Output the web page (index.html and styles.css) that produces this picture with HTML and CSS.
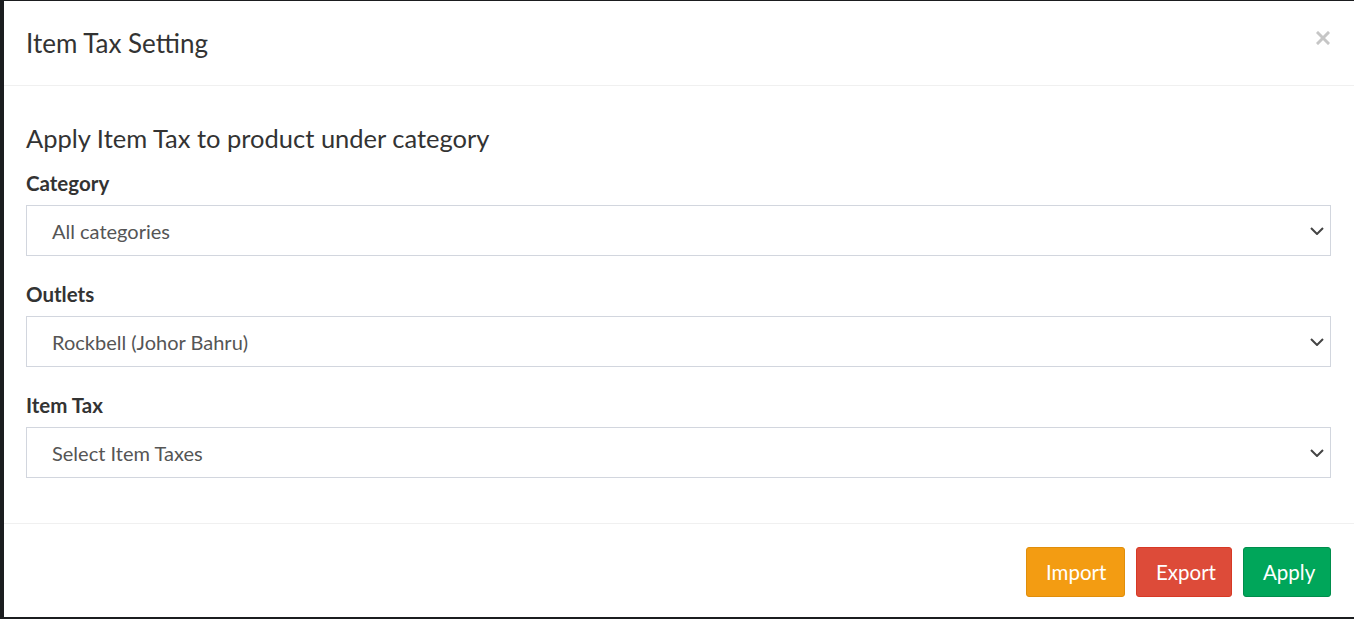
FILE: index.html
```html
<!DOCTYPE html>
<html lang="en">
<head>
<meta charset="utf-8">
<title>Item Tax Setting</title>
<link rel="stylesheet" href="styles.css">
</head>
<body>
<div class="backdrop">
  <div class="modal">
    <div class="modal-header">
      <h3 class="modal-title">Item Tax Setting</h3>
      <button class="close" type="button" aria-label="Close">
        <svg width="14" height="14" viewBox="0 0 14 14"><path d="M2 2 L12 12 M12 2 L2 12" stroke="#c6c6c6" stroke-width="3" stroke-linecap="square"/></svg>
      </button>
    </div>
    <div class="modal-body">
      <h4 class="section-title">Apply Item Tax to product under category</h4>
      <div class="field">
        <label class="field-label">Category</label>
        <div class="select"><span>All categories</span><svg class="chev" width="14" height="8" viewBox="0 0 14 8"><path d="M1 1 L7 7 L13 1" fill="none" stroke="#444" stroke-width="2"/></svg></div>
      </div>
      <div class="field">
        <label class="field-label">Outlets</label>
        <div class="select"><span>Rockbell (Johor Bahru)</span><svg class="chev" width="14" height="8" viewBox="0 0 14 8"><path d="M1 1 L7 7 L13 1" fill="none" stroke="#444" stroke-width="2"/></svg></div>
      </div>
      <div class="field">
        <label class="field-label">Item Tax</label>
        <div class="select"><span>Select Item Taxes</span><svg class="chev" width="14" height="8" viewBox="0 0 14 8"><path d="M1 1 L7 7 L13 1" fill="none" stroke="#444" stroke-width="2"/></svg></div>
      </div>
    </div>
    <div class="modal-footer">
      <button class="btn btn-import" type="button">Import</button>
      <button class="btn btn-export" type="button">Export</button>
      <button class="btn btn-apply" type="button">Apply</button>
    </div>
  </div>
</div>
</body>
</html>
```
FILE: styles.css
```css
html, body {
  margin: 0;
  padding: 0;
  height: 100%;
}
body {
  background: #1b1d1f;
  font-family: "Lato", "Liberation Sans", sans-serif;
  color: #333;
  overflow: hidden;
}
.backdrop {
  padding: 1px 0 2px 4px;
  height: 619px;
  box-sizing: border-box;
  display: flex;
}
.modal {
  flex: 1;
  background: #fff;
  display: flex;
  flex-direction: column;
}
.modal-header {
  height: 85px;
  box-sizing: border-box;
  border-bottom: 1px solid #f0f0f0;
  display: flex;
  align-items: center;
  justify-content: space-between;
  padding: 0 24px 0 22px;
}
.modal-title {
  margin: 0;
  font-size: 26px;
  font-weight: 400;
  line-height: 30px;
  color: #333;
}
.close {
  border: 0;
  background: none;
  padding: 0;
  margin-top: -10px;
  display: flex;
  cursor: pointer;
}
.modal-body {
  padding: 37px 23px 45px 22px;
  display: flex;
  flex-direction: column;
}
.section-title {
  margin: 0 0 19px;
  font-size: 25.5px;
  font-weight: 400;
  line-height: 30px;
  color: #333;
}
.field {
  display: flex;
  flex-direction: column;
}
.field + .field {
  margin-top: 27px;
}
.field-label {
  font-size: 20.5px;
  font-weight: 700;
  line-height: 22px;
  margin-bottom: 11px;
  color: #333;
}
.select {
  height: 51px;
  box-sizing: border-box;
  border: 1px solid #d2d6de;
  display: flex;
  align-items: center;
  justify-content: space-between;
  padding: 0 6px 0 25px;
  font-size: 20px;
  color: #555;
}
.chev {
  display: block;
}
.modal-footer {
  border-top: 1px solid #f0f0f0;
  flex: 1;
  display: flex;
  justify-content: flex-end;
  align-items: flex-start;
  gap: 11px;
  padding: 23px 23px 0 0;
}
.btn {
  height: 50px;
  border-radius: 3px;
  border: 1px solid transparent;
  font-family: inherit;
  font-size: 20.5px;
  color: #fff;
  padding: 0 19px;
  cursor: pointer;
}
.btn-import {
  background: #f39c12;
  border-color: #e08e0b;
  width: 99px;
}
.btn-export {
  background: #dd4b39;
  border-color: #d73925;
  width: 96px;
}
.btn-apply {
  background: #00a65a;
  border-color: #008d4c;
  width: 88px;
}
```
